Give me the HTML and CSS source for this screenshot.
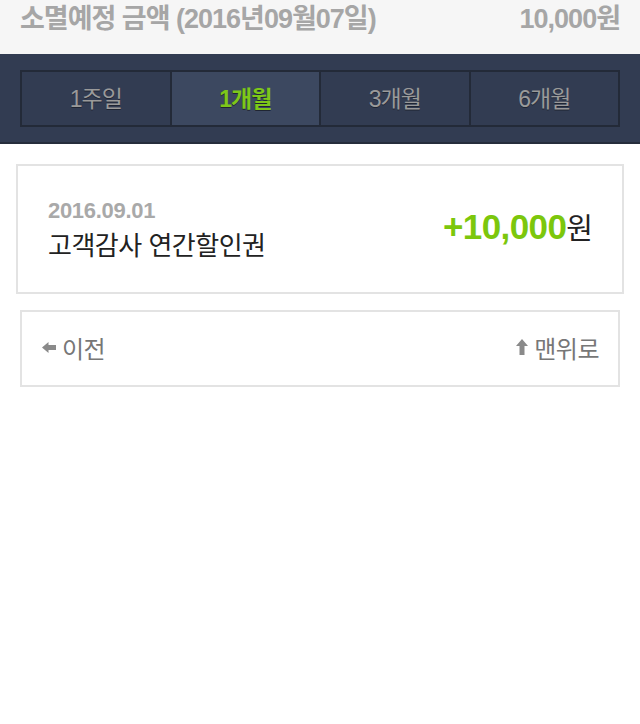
FILE: index.html
```html
<!DOCTYPE html>
<html lang="ko">

<head>
    <meta charset="UTF-8">
    <meta name="viewport" content="width=device-width, initial-scale=1.0">
    <title>할인권 내역</title>
    <link rel="stylesheet" href="styles.css">
</head>

<body>

    <!-- Expiring amount -->
    <div class="expire-bar">
        <span class="expire-label">소멸예정 금액 (2016년09월07일)</span>
        <span class="expire-value">10,000원</span>
    </div>

    <!-- Period tabs -->
    <div class="period-band">
        <ul class="period-tabs">
            <li class="tab">1주일</li>
            <li class="tab active">1개월</li>
            <li class="tab">3개월</li>
            <li class="tab">6개월</li>
        </ul>
    </div>

    <!-- History list -->
    <div class="history-card">
        <div class="history-info">
            <span class="history-date">2016.09.01</span>
            <span class="history-title">고객감사 연간할인권</span>
        </div>
        <div class="history-amount"><span class="plus">+10,000</span>원</div>
    </div>

    <!-- Paging -->
    <div class="paging">
        <a class="paging-link" href="#">
            <svg class="icon" width="14" height="11" viewBox="0 0 14 11">
                <polygon points="0,5.5 6.5,0 6.5,3 14,3 14,8 6.5,8 6.5,11" fill="#8a8a8a" />
            </svg>이전
        </a>
        <a class="paging-link" href="#">
            <svg class="icon" width="12" height="16" viewBox="0 0 12 16">
                <polygon points="6,0 12,7 8.5,7 8.5,16 3.5,16 3.5,7 0,7" fill="#8a8a8a" />
            </svg>맨위로
        </a>
    </div>

</body>

</html>
```

FILE: styles.css
```css
* {
    margin: 0;
    padding: 0;
    box-sizing: border-box;
}

body {
    width: 640px;
    min-height: 724px;
    background: #fff;
    font-family: "Liberation Sans", "Noto Sans CJK KR", sans-serif;
}

/* Expiring amount */
.expire-bar {
    height: 54px;
    background: #f6f6f6;
    display: flex;
    justify-content: space-between;
    align-items: center;
    padding: 0 20px 21px 20px;
    color: #a6a6a6;
    font-size: 27px;
    font-weight: bold;
    letter-spacing: -1px;
}

/* Period tabs */
.period-band {
    background: #323c52;
    padding: 16px 20px 15px 20px;
    border-bottom: 2px solid #262d3c;
}

.period-tabs {
    list-style: none;
    display: flex;
    border: 2px solid #232a38;
    background: #232a38;
    gap: 2px;
}

.tab {
    flex: 1;
    height: 53px;
    display: flex;
    justify-content: center;
    align-items: center;
    padding-bottom: 3px;
    background: #323c52;
    color: #9a9a9a;
    font-size: 23px;
    letter-spacing: -1px;
    text-shadow: 0 1px 0 #1f2533;
}

.tab.active {
    background: #3c4860;
    color: #7dc71a;
    font-weight: bold;
}

/* History list */
.history-card {
    margin: 20px 16px 0 16px;
    height: 130px;
    border: 2px solid #e3e3e3;
    display: flex;
    justify-content: space-between;
    align-items: center;
    padding: 0 30px 0 30px;
}

.history-info {
    display: flex;
    flex-direction: column;
    gap: 1px;
    padding-top: 2px;
}

.history-date {
    color: #a9a9a9;
    font-size: 22px;
    font-weight: bold;
    letter-spacing: -0.3px;
}

.history-title {
    color: #222;
    font-size: 26px;
    letter-spacing: -0.5px;
}

.history-amount {
    color: #222;
    font-size: 29px;
    letter-spacing: -1px;
    padding-bottom: 6px;
}

.plus {
    color: #7cc70c;
    font-size: 35px;
    font-weight: bold;
    letter-spacing: -0.6px;
}

/* Paging */
.paging {
    margin: 16px 20px 0 20px;
    height: 77px;
    border: 2px solid #e3e3e3;
    display: flex;
    justify-content: space-between;
    align-items: center;
    padding: 0 19px 3px 20px;
}

.paging-link {
    display: flex;
    align-items: center;
    gap: 6px;
    color: #777;
    font-size: 24px;
    text-decoration: none;
    letter-spacing: -0.5px;
}
```
